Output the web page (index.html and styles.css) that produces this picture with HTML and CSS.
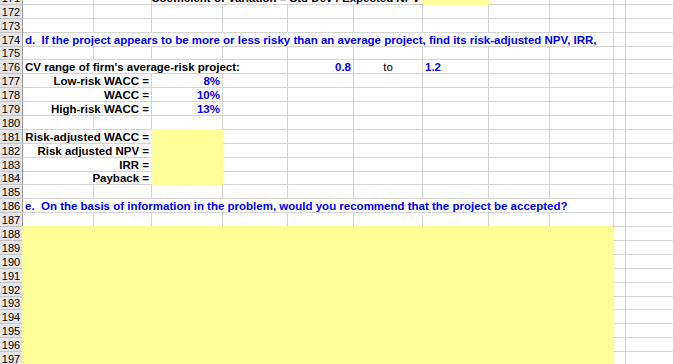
FILE: index.html
```html
<!DOCTYPE html>
<html>
<head>
<meta charset="utf-8">
<link rel="stylesheet" href="styles.css">
</head>
<body>
<div class="sheet">
  <div class="row"><div class="h">171</div><div class="c"></div><div class="c"></div><div class="c s4 r bold">Coefficient of Variation = Std Dev / Expected NPV</div><div class="c y"></div><div class="c"></div><div class="c"></div><div class="c"></div><div class="c"></div></div>
  <div class="row"><div class="h">172</div><div class="c"></div><div class="c"></div><div class="c"></div><div class="c"></div><div class="c"></div><div class="c"></div><div class="c"></div><div class="c"></div><div class="c"></div><div class="c"></div><div class="c"></div></div>
  <div class="row"><div class="h">173</div><div class="c"></div><div class="c"></div><div class="c"></div><div class="c"></div><div class="c"></div><div class="c"></div><div class="c"></div><div class="c"></div><div class="c"></div><div class="c"></div><div class="c"></div></div>
  <div class="row"><div class="h">174</div><div class="c s9 bold blue pre">d.  If the project appears to be more or less risky than an average project, find its risk-adjusted NPV, IRR,</div><div class="c"></div><div class="c"></div></div>
  <div class="row"><div class="h">175</div><div class="c"></div><div class="c"></div><div class="c"></div><div class="c"></div><div class="c"></div><div class="c"></div><div class="c"></div><div class="c"></div><div class="c"></div><div class="c"></div><div class="c"></div></div>
  <div class="row"><div class="h">176</div><div class="c s4 bold">CV range of firm's average-risk project:</div><div class="c r bold blue">0.8</div><div class="c ctr">to</div><div class="c bold blue">1.2</div><div class="c"></div><div class="c"></div><div class="c"></div><div class="c"></div></div>
  <div class="row"><div class="h">177</div><div class="c s2 r bold">Low-risk WACC =</div><div class="c r bold blue">8%</div><div class="c"></div><div class="c"></div><div class="c"></div><div class="c"></div><div class="c"></div><div class="c"></div><div class="c"></div><div class="c"></div></div>
  <div class="row"><div class="h">178</div><div class="c s2 r bold">WACC =</div><div class="c r bold blue">10%</div><div class="c"></div><div class="c"></div><div class="c"></div><div class="c"></div><div class="c"></div><div class="c"></div><div class="c"></div><div class="c"></div></div>
  <div class="row"><div class="h">179</div><div class="c s2 r bold">High-risk WACC =</div><div class="c r bold blue">13%</div><div class="c"></div><div class="c"></div><div class="c"></div><div class="c"></div><div class="c"></div><div class="c"></div><div class="c"></div><div class="c"></div></div>
  <div class="row"><div class="h">180</div><div class="c"></div><div class="c"></div><div class="c"></div><div class="c"></div><div class="c"></div><div class="c"></div><div class="c"></div><div class="c"></div><div class="c"></div><div class="c"></div><div class="c"></div></div>
  <div class="row"><div class="h">181</div><div class="c s2 r bold">Risk-adjusted WACC =</div><div class="c y"></div><div class="c"></div><div class="c"></div><div class="c"></div><div class="c"></div><div class="c"></div><div class="c"></div><div class="c"></div><div class="c"></div></div>
  <div class="row"><div class="h">182</div><div class="c s2 r bold">Risk adjusted NPV =</div><div class="c y"></div><div class="c"></div><div class="c"></div><div class="c"></div><div class="c"></div><div class="c"></div><div class="c"></div><div class="c"></div><div class="c"></div></div>
  <div class="row"><div class="h">183</div><div class="c s2 r bold">IRR =</div><div class="c y"></div><div class="c"></div><div class="c"></div><div class="c"></div><div class="c"></div><div class="c"></div><div class="c"></div><div class="c"></div><div class="c"></div></div>
  <div class="row"><div class="h">184</div><div class="c s2 r bold">Payback =</div><div class="c y"></div><div class="c"></div><div class="c"></div><div class="c"></div><div class="c"></div><div class="c"></div><div class="c"></div><div class="c"></div><div class="c"></div></div>
  <div class="row"><div class="h">185</div><div class="c"></div><div class="c"></div><div class="c"></div><div class="c"></div><div class="c"></div><div class="c"></div><div class="c"></div><div class="c"></div><div class="c"></div><div class="c"></div><div class="c"></div></div>
  <div class="row"><div class="h">186</div><div class="c s9 bold blue pre">e.  On the basis of information in the problem, would you recommend that the project be accepted?</div><div class="c"></div><div class="c"></div></div>
  <div class="row"><div class="h">187</div><div class="c"></div><div class="c"></div><div class="c"></div><div class="c"></div><div class="c"></div><div class="c"></div><div class="c"></div><div class="c"></div><div class="c"></div><div class="c"></div><div class="c"></div></div>
  <div class="row"><div class="h">188</div><div class="c s9 y"></div><div class="c"></div><div class="c"></div></div>
  <div class="row"><div class="h">189</div><div class="c s9 y"></div><div class="c"></div><div class="c"></div></div>
  <div class="row"><div class="h">190</div><div class="c s9 y"></div><div class="c"></div><div class="c"></div></div>
  <div class="row"><div class="h">191</div><div class="c s9 y"></div><div class="c"></div><div class="c"></div></div>
  <div class="row"><div class="h">192</div><div class="c s9 y"></div><div class="c"></div><div class="c"></div></div>
  <div class="row"><div class="h">193</div><div class="c s9 y"></div><div class="c"></div><div class="c"></div></div>
  <div class="row"><div class="h">194</div><div class="c s9 y"></div><div class="c"></div><div class="c"></div></div>
  <div class="row"><div class="h">195</div><div class="c s9 y"></div><div class="c"></div><div class="c"></div></div>
  <div class="row"><div class="h">196</div><div class="c s9 y"></div><div class="c"></div><div class="c"></div></div>
  <div class="row"><div class="h">197</div><div class="c s9 y"></div><div class="c"></div><div class="c"></div></div>
</div>
</body>
</html>
```

FILE: styles.css
```css
html, body {
  margin: 0;
  padding: 0;
  background: #ffffff;
  overflow: hidden;
}
.sheet {
  margin-top: -9px;
  font-family: "Liberation Sans", Arial, sans-serif;
  font-size: 11.5px;
  color: #000000;
}
.row {
  display: grid;
  grid-template-columns: 23px 71px 58px 71px 65px 66px 69px 66px 61px 64px 12px 1fr;
  height: 13.9px;
}
.h {
  box-sizing: border-box;
  background: #e6e6e6;
  border-right: 1px solid #9a9a9a;
  border-bottom: 1px solid #c4c4c4;
  font-size: 11px;
  line-height: 12px;
  display: flex;
  align-items: flex-end;
  justify-content: center;
  overflow: hidden;
}
.c {
  box-sizing: border-box;
  border-right: 1px solid #d4d4d4;
  border-bottom: 1px solid #d4d4d4;
  display: flex;
  align-items: flex-end;
  justify-content: flex-start;
  white-space: nowrap;
  line-height: 12px;
  padding: 0 2px 0 2px;
  min-width: 0;
}
.s2 { grid-column: span 2; }
.s4 { grid-column: span 4; }
.s9 { grid-column: span 9; }
.r { justify-content: flex-end; }
.ctr { justify-content: center; }
.bold { font-weight: bold; }
.blue { color: #0000ff; }
.pre { white-space: pre; }
.y {
  background: #ffff99;
  border-color: #ffff99;
  box-shadow: -1px -1px 0 0 #ffff99;
}
```
